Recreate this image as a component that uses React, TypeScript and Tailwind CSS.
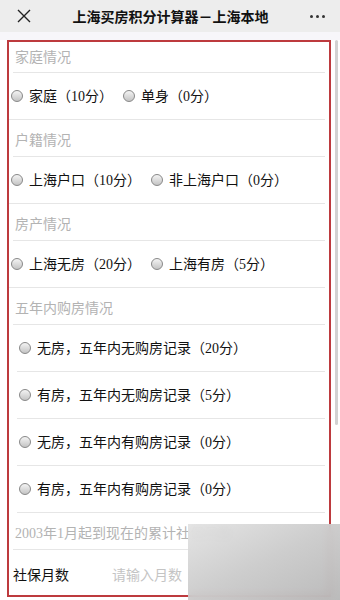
import React from "react";

const cjk = { fontFamily: '"Liberation Serif", "Noto Sans CJK SC", serif' };
const sans = { fontFamily: '"Noto Sans CJK SC", "Noto Sans", sans-serif' };

const Radio: React.FC = () => (
  <span className="inline-block w-[12px] h-[12px] rounded-full border border-[#888] bg-gradient-to-b from-[#f4f4f4] to-[#c4c4c4] shrink-0" />
);

const Section: React.FC<{ title: string; first?: boolean }> = ({ title, first }) => (
  <div
    className={
      "mx-[4px] border-b border-[#e6e6e6] flex items-center text-[14px] text-[#b3b3b3] pl-[2px] whitespace-nowrap " +
      (first ? "h-[31px]" : "h-[37px] pt-[5px]")
    }
  >
    {title}
  </div>
);

const Option: React.FC<{ label: string }> = ({ label }) => (
  <span className="flex items-center">
    <Radio />
    <span className="ml-[6px] text-[14px] text-[#111]">{label}</span>
  </span>
);

const InlineRow: React.FC<{ options: string[] }> = ({ options }) => (
  <div className="mx-[4px] border-b border-[#e6e6e6] h-[47px] flex items-center gap-[10px] -ml-[2px] pl-[4px]">
    {options.map((o) => (
      <Option key={o} label={o} />
    ))}
  </div>
);

const ListRow: React.FC<{ label: string }> = ({ label }) => (
  <div className="mx-[4px] border-b border-[#e6e6e6] h-[47px] flex items-center pl-[2px]">
    <Option label={label} />
  </div>
);

export default function App() {
  return (
    <div className="w-[340px] h-[600px] overflow-hidden bg-white relative" style={cjk}>
      {/* top bar */}
      <div className="h-[32px] bg-[#ededed] flex items-center justify-between px-[16px]">
        <svg width="14" height="14" viewBox="0 0 14 14" className="ml-[1px]">
          <path d="M1 1 L13 13 M13 1 L1 13" stroke="#222" strokeWidth="1.4" />
        </svg>
        <div className="w-[198px] text-center whitespace-nowrap text-[14px] font-bold text-[#111]" style={sans}>
          上海买房积分计算器－上海本地
        </div>
        <div className="flex gap-[3px] mr-[-1px]">
          <span className="w-[3px] h-[3px] rounded-full bg-[#333]" />
          <span className="w-[3px] h-[3px] rounded-full bg-[#333]" />
          <span className="w-[3px] h-[3px] rounded-full bg-[#333]" />
        </div>
      </div>
      <div className="h-[8px] bg-[#f7f6fa]" />

      {/* annotated form */}
      <div className="ml-[7px] w-[324px] h-[557px] border-2 border-[#bd3a3e] overflow-hidden bg-white">
        <Section title="家庭情况" first />
        <InlineRow options={["家庭（10分）", "单身（0分）"]} />
        <Section title="户籍情况" />
        <InlineRow options={["上海户口（10分）", "非上海户口（0分）"]} />
        <Section title="房产情况" />
        <InlineRow options={["上海无房（20分）", "上海有房（5分）"]} />
        <Section title="五年内购房情况" />
        <div className="pl-[4px]">
          <ListRow label="无房，五年内无购房记录（20分）" />
          <ListRow label="有房，五年内无购房记录（5分）" />
          <ListRow label="无房，五年内有购房记录（0分）" />
          <ListRow label="有房，五年内有购房记录（0分）" />
        </div>
        <Section title="2003年1月起到现在的累计社保月数" />
        <div className="mx-[4px] h-[50px] flex items-center text-[14px]">
          <span className="text-[#111] w-[99px]">社保月数</span>
          <span className="text-[#c4c4c4]">请输入月数</span>
        </div>
      </div>

      {/* scrollbar */}
      <div className="absolute left-[335px] top-[40px] w-[3px] h-[385px] rounded-full bg-[#d2d2d2]" />

      {/* blurred watermark */}
      <div className="absolute left-[188px] top-[524px] w-[152px] h-[76px] backdrop-blur-[4px] bg-gradient-to-br from-[#e2e2e2]/90 via-[#c8c8c8]/90 to-[#b4b4b4]/90" />
    </div>
  );
}
